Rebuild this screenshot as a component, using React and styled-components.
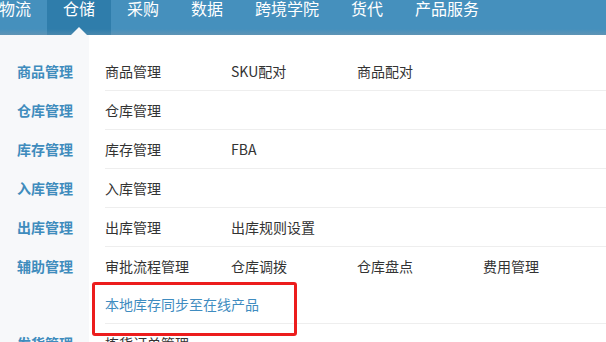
import styled, { createGlobalStyle } from "styled-components";

const GlobalStyle = createGlobalStyle`
  body {
    margin: 0;
    overflow: hidden;
    background: #fff;
    font-family: "Noto Sans CJK SC", "Noto Sans", sans-serif;
  }
`;

const tabs = ["物流", "仓储", "采购", "数据", "跨境学院", "货代", "产品服务"];

const groups = [
  { name: "商品管理", items: ["商品管理", "SKU配对", "商品配对"] },
  { name: "仓库管理", items: ["仓库管理"] },
  { name: "库存管理", items: ["库存管理", "FBA"] },
  { name: "入库管理", items: ["入库管理"] },
  { name: "出库管理", items: ["出库管理", "出库规则设置"] },
  {
    name: "辅助管理",
    items: ["审批流程管理", "仓库调拨", "仓库盘点", "费用管理"],
    link: "本地库存同步至在线产品",
  },
  { name: "发货管理", items: ["拣货订单管理"] },
];

export default function App() {
  return (
    <>
      <GlobalStyle />
      <Header>
        {tabs.map((tab) => (
          <Tab key={tab} $active={tab === "仓储"}>
            {tab}
          </Tab>
        ))}
      </Header>
      <Menu>
        {groups.map((group) => (
          <Row key={group.name}>
            <Label>{group.name}</Label>
            <Items>
              {group.items.map((item) => (
                <Item key={item}>{item}</Item>
              ))}
              {group.link && (
                <LinkItem>
                  {group.link}
                  <Highlight />
                </LinkItem>
              )}
            </Items>
          </Row>
        ))}
      </Menu>
    </>
  );
}

const Header = styled.nav`
  display: flex;
  height: 35px;
  margin-left: -17px;
  background: linear-gradient(to bottom, #4590bd 0, #4590bd 29px, #5f94b5 35px);
`;

const Tab = styled.div`
  position: relative;
  padding: 0 16px;
  font-size: 16px;
  line-height: 16px;
  color: #fff;
  background: ${(p) => (p.$active ? "linear-gradient(to bottom, #2f7dab 0, #2f7dab 29px, #4a88ad 35px)" : "transparent")};

  &::after {
    content: "";
    display: ${(p) => (p.$active ? "block" : "none")};
    position: absolute;
    left: 50%;
    bottom: 0;
    transform: translateX(-50%);
    border-left: 8px solid transparent;
    border-right: 8px solid transparent;
    border-bottom: 8px solid #f7f8fa;
  }
`;

const Menu = styled.div`
  width: 760px;
  padding-top: 17px;
  background: linear-gradient(to right, #f7f8fa 89px, #fff 89px);
`;

const Row = styled.div`
  display: flex;
`;

const Label = styled.div`
  width: 89px;
  flex-shrink: 0;
  box-sizing: border-box;
  padding-left: 17px;
  font-size: 14px;
  font-weight: bold;
  line-height: 38px;
  color: #3f8cbd;
`;

const Items = styled.div`
  flex: 1;
  display: flex;
  flex-wrap: wrap;
  margin-left: 16px;
  border-bottom: 1px solid #eeeeee;
`;

const Item = styled.div`
  width: 126px;
  font-size: 14px;
  line-height: 38px;
  color: #333;
`;

const LinkItem = styled(Item)`
  position: relative;
  width: 100%;
  color: #3f8cc0;
`;

const Highlight = styled.span`
  position: absolute;
  left: -13px;
  top: -3px;
  width: 205px;
  height: 54px;
  box-sizing: border-box;
  border: 3px solid #ec1d1d;
  border-radius: 3px;
`;
